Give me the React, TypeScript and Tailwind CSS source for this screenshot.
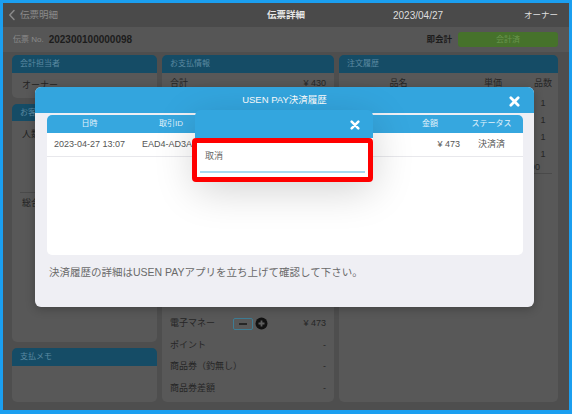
import React from "react";

function XIcon({ size, stroke }: { size: number; stroke: number }) {
  return (
    <svg width={size} height={size} viewBox="0 0 12 12" fill="none">
      <path d="M2 2L10 10M10 2L2 10" stroke="white" strokeWidth={stroke} strokeLinecap="round" />
    </svg>
  );
}

function PanelHeader({ title }: { title: string }) {
  return (
    <div className="h-[18px] shrink-0 bg-[#154c66] rounded-t-[5px] flex items-center pl-[8px] text-[8px] text-[#5b8aa1]">
      {title}
    </div>
  );
}

export default function App() {
  return (
    <div className="relative w-[572px] h-[414px] overflow-hidden border-[3px] border-b-[4px] border-[#1b9ff0] bg-[#4e4e4e] [font-family:'Liberation_Sans','Noto_Sans_CJK_JP',sans-serif] flex flex-col">
      {/* top navigation bar */}
      <div className="h-[24px] shrink-0 bg-[#4a4a4a] grid grid-cols-[1fr_auto_1fr] items-center">
        <div className="flex items-center pl-[5px] text-[#8a8a8a]">
          <svg width="8" height="12" viewBox="0 0 8 12" fill="none">
            <path d="M6 1.5L1.8 6L6 10.5" stroke="#8a8a8a" strokeWidth="1.5" strokeLinecap="round" strokeLinejoin="round" />
          </svg>
          <span className="ml-[4px] text-[9.5px]">伝票明細</span>
        </div>
        <div className="text-[9.5px] font-bold text-[#e6e6e6]">伝票詳細</div>
        <div className="flex items-center justify-between pl-[88px] pr-[11px]">
          <span className="text-[10px] text-[#dedede]">2023/04/27</span>
          <span className="text-[8.5px] text-[#e0e0e0]">オーナー</span>
        </div>
      </div>

      {/* slip number row */}
      <div className="h-[25px] shrink-0 bg-[#565656] flex items-center pl-[10px] pr-[11px]">
        <span className="text-[8px] text-[#8a8a8a]">伝票 No.</span>
        <span className="ml-[5px] text-[10px] font-bold text-[#1c1c1c]">202300100000098</span>
        <span className="ml-auto text-[8.5px] font-bold text-[#1c1c1c]">即会計</span>
        <div className="ml-[6px] w-[100px] h-[15px] rounded-[3px] bg-[#46722b] flex items-center justify-center text-[8px] text-[#6a954d]">
          会計済
        </div>
      </div>

      {/* columns */}
      <div className="mt-[3px] h-[347px] flex gap-[5px] pl-[9px] pr-[11px]">
        {/* column 1 */}
        <div className="w-[145px] flex flex-col gap-[6px]">
          <div className="flex flex-col">
            <PanelHeader title="会計担当者" />
            <div className="h-[25px] bg-[#585858] rounded-b-[5px] flex items-center pl-[10px] text-[9px] text-[#222]">
              オーナー
            </div>
          </div>
          <div className="flex-1 flex flex-col">
            <div className="h-[17px] shrink-0 bg-[#154c66] rounded-t-[5px] flex items-center pl-[8px] text-[8px] text-[#5b8aa1]">
              お客様情報
            </div>
            <div className="flex-1 bg-[#585858] rounded-b-[5px] flex flex-col">
              <div className="h-[28px] flex items-center pl-[10px] text-[9px] text-[#222]">人数</div>
              <div className="h-[43px]" />
              <div className="mx-[8px] border-t border-[#4a4a4a]" />
              <div className="h-[22px] flex items-center pl-[10px] text-[9px] text-[#222]">総合計</div>
            </div>
          </div>
          <div className="flex flex-col">
            <PanelHeader title="支払メモ" />
            <div className="h-[36px] bg-[#585858] rounded-b-[5px]" />
          </div>
        </div>

        {/* column 2 */}
        <div className="w-[172px] flex flex-col">
          <PanelHeader title="お支払情報" />
          <div className="flex-1 bg-[#585858] rounded-b-[5px] flex flex-col px-[8px] pb-[3px] text-[9px] text-[#262626]">
            <div className="h-[22px] flex items-center justify-between">
              <span>合計</span>
              <span>¥ 430</span>
            </div>
            <div className="flex-1" />
            <div className="h-[21.5px] flex items-center">
              <span className="w-[63px]">電子マネー</span>
              <div className="w-[20px] h-[12px] rounded-[2px] border border-[#3e7c94] flex items-center justify-center">
                <div className="w-[8px] h-[1.5px] bg-[#262626]" />
              </div>
              <svg className="ml-[2px]" width="13" height="13" viewBox="0 0 13 13">
                <circle cx="6.5" cy="6.5" r="6" fill="#111" />
                <path d="M6.5 3.5V9.5M3.5 6.5H9.5" stroke="#5e5e5e" strokeWidth="1.8" />
              </svg>
              <span className="ml-auto">¥ 473</span>
            </div>
            <div className="h-[21.5px] flex items-center justify-between">
              <span>ポイント</span>
              <span>-</span>
            </div>
            <div className="h-[21.5px] flex items-center justify-between">
              <span>商品券（釣無し）</span>
              <span>-</span>
            </div>
            <div className="h-[21.5px] flex items-center justify-between">
              <span>商品券差額</span>
              <span>-</span>
            </div>
          </div>
        </div>

        {/* column 3 */}
        <div className="flex-1 flex flex-col">
          <PanelHeader title="注文履歴" />
          <div className="flex-1 bg-[#585858] rounded-b-[5px] flex flex-col text-[9px] text-[#262626]">
            <div className="h-[22px] grid grid-cols-[1fr_70px_30px] items-center text-center">
              <span>品名</span>
              <span>単価</span>
              <span>品数</span>
            </div>
            {["r1", "r2", "r3", "r4"].map((n) => (
              <div key={n} className="h-[17px] grid grid-cols-[1fr_70px_30px] items-center text-center">
                <span />
                <span />
                <span>1</span>
              </div>
            ))}
            <div className="h-[11px] flex items-center justify-end pr-[12px] border-b border-[#4a4a4a] mx-[6px]">
              1,090
            </div>
          </div>
        </div>
      </div>

      {/* USEN PAY modal */}
      <div className="absolute left-[32px] top-[84px] w-[499px] h-[220px] rounded-[6px] overflow-hidden bg-[#efeff4] flex flex-col shadow-[0_2px_10px_rgba(0,0,0,0.25)]">
        <div className="relative h-[26px] shrink-0 bg-[#33a5de] flex items-center justify-center text-[9.5px] text-white">
          USEN PAY決済履歴
          <div className="absolute right-[14px] top-[9px]">
            <XIcon size={11} stroke={3} />
          </div>
        </div>
        <div className="pt-[2px] pl-[12px] pr-[11px] flex flex-col">
          <div className="h-[140px] bg-white rounded-[5px] overflow-hidden flex flex-col">
            <div className="h-[18px] shrink-0 bg-[#36a7df] grid grid-cols-[85px_78px_1fr_60px_63px] items-center text-center text-[8px] text-[#e2f2fb]">
              <span>日時</span>
              <span>取引ID</span>
              <span />
              <span>金額</span>
              <span>ステータス</span>
            </div>
            <div className="h-[24px] shrink-0 grid grid-cols-[85px_78px_1fr_60px_63px] items-center border-b border-[#e8e8ec] text-[9px] text-[#555]">
              <span className="text-center whitespace-nowrap">2023-04-27 13:07</span>
              <span className="pl-[10px] whitespace-nowrap">EAD4-AD3A-7C21</span>
              <span />
              <span className="text-right whitespace-nowrap">¥ 473</span>
              <span className="text-center">決済済</span>
            </div>
          </div>
          <div className="mt-[11px] pl-[2px] text-[10.5px] leading-[12px] text-[#6a6a6a] whitespace-nowrap">
            決済履歴の詳細はUSEN PAYアプリを立ち上げて確認して下さい。
          </div>
        </div>
      </div>

      {/* small action dialog */}
      <div className="absolute left-[192px] top-[107px] w-[178px] rounded-[6px] overflow-hidden shadow-[0_10px_40px_rgba(0,0,0,0.18)] flex flex-col">
        <div className="relative h-[28px] bg-[#33a6df]">
          <div className="absolute right-[13px] top-[10px]">
            <XIcon size={10} stroke={3} />
          </div>
        </div>
        <div className="h-[42px] bg-white flex flex-col">
          <div className="mt-[12px] pl-[10px] text-[9px] leading-[12px] text-[#666]">取消</div>
          <div className="mt-[9px] ml-[5px] mr-[8px] h-[2px] bg-[#a9d9f0]" />
        </div>
      </div>

      {/* red highlight annotation */}
      <div className="absolute left-[189px] top-[135px] w-[181px] h-[44px] border-[5px] border-[#ff0000] rounded-[4px]" />
    </div>
  );
}
